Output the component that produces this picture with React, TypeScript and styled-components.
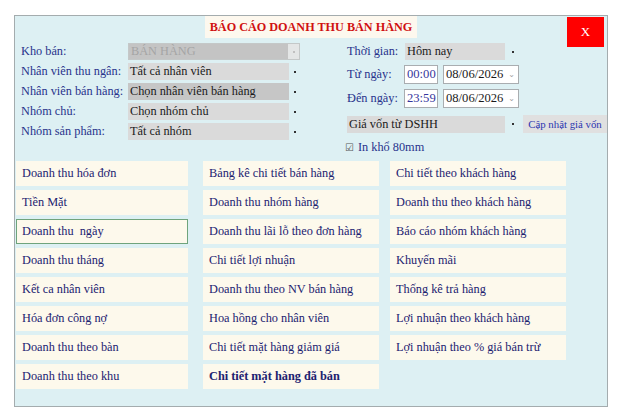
import { Fragment } from "react";
import styled, { createGlobalStyle, css } from "styled-components";

const GlobalStyle = createGlobalStyle`
  html, body {
    margin: 0;
    padding: 0;
    background: #ffffff;
  }
  body {
    font-family: "Liberation Serif", "Times New Roman", serif;
  }
`;

const navy = "#28338c";
const ink = "#1c2270";
const textSize = "12.3px";

const Panel = styled.div`
  box-sizing: border-box;
  margin: 15px 0 0 14px;
  width: 594px;
  height: 392px;
  border: 1px solid #a4acae;
  background: #ddf0f3;
  display: flex;
  flex-direction: column;
`;

const Header = styled.div`
  display: grid;
  grid-template-columns: 1fr auto 1fr;
  grid-template-rows: 27px;
  align-items: start;
`;

const Title = styled.h1`
  grid-column: 2;
  margin: 0;
  height: 22px;
  padding: 0 5px;
  background: #fdf8ee;
  color: #d01010;
  font-size: 12.2px;
  font-weight: bold;
  line-height: 23px;
  white-space: nowrap;
`;

const CloseButton = styled.button`
  grid-column: 3;
  justify-self: end;
  margin: 1px 3px 0 0;
  width: 37px;
  height: 30px;
  border: none;
  background: #ff0000;
  color: #ffffff;
  font-family: "Liberation Serif", serif;
  font-size: 13px;
  padding: 0;
`;

const FormArea = styled.div`
  display: flex;
  height: 118px;
`;

const LeftForm = styled.div`
  margin-left: 6px;
  display: grid;
  grid-template-columns: 107px 172px;
  grid-auto-rows: 17px;
  row-gap: 3px;
  align-content: start;
`;

const Label = styled.span<{ $w?: number }>`
  color: ${navy};
  font-size: ${textSize};
  line-height: 17px;
  white-space: nowrap;
  ${(p) =>
    p.$w &&
    css`
      width: ${p.$w}px;
      flex: none;
    `}
`;

const SelectBox = styled.div<{ $w: number; $disabled?: boolean }>`
  box-sizing: border-box;
  display: flex;
  width: ${(p) => p.$w}px;
  height: 17px;
  ${(p) =>
    p.$disabled &&
    css`
      border: 1px solid #c4c8c8;
    `}
`;

type Tone = "normal" | "dark" | "disabled";

const SelectValue = styled.div<{ $tone: Tone }>`
  flex: 1;
  padding-left: 2px;
  font-size: ${textSize};
  line-height: ${(p) => (p.$tone === "disabled" ? 15 : 17)}px;
  white-space: nowrap;
  overflow: hidden;
  color: ${(p) => (p.$tone === "disabled" ? "#a4a4a4" : "#1a1a1a")};
  background: ${(p) =>
    p.$tone === "dark" ? "#c6c6c6" : p.$tone === "disabled" ? "#c4c4c4" : "#dadada"};
`;

const SelectArrow = styled.div<{ $disabled?: boolean; $w: number }>`
  width: ${(p) => p.$w}px;
  display: flex;
  align-items: center;
  justify-content: center;
  background: ${(p) => (p.$disabled ? "#e4e6e6" : "transparent")};
  &::after {
    content: "";
    width: 2px;
    height: 2px;
    background: ${(p) => (p.$disabled ? "#c0c0c0" : "#333")};
  }
`;

const RightForm = styled.div`
  margin-left: 47px;
  display: flex;
  flex-direction: column;
  gap: 5px;
`;

const Row = styled.div<{ $mt?: number }>`
  display: flex;
  align-items: center;
  margin-top: ${(p) => p.$mt ?? 0}px;
`;

const InputBox = styled.div<{ $w: number; $blue?: boolean; $ml?: number }>`
  box-sizing: border-box;
  display: flex;
  align-items: center;
  justify-content: space-between;
  width: ${(p) => p.$w}px;
  height: 19px;
  margin-left: ${(p) => p.$ml ?? 0}px;
  padding: 0 3px 0 2px;
  background: #ffffff;
  border: 1px solid #a9adb0;
  color: ${(p) => (p.$blue ? "#35359c" : "#1a1a1a")};
  font-size: 12.6px;
  white-space: nowrap;
`;

const Chevron = styled.span`
  color: #a0a0a0;
  font-size: 8px;
  font-family: "DejaVu Sans", sans-serif;
`;

const UpdateButton = styled.button`
  margin-left: 3px;
  width: 84px;
  height: 18px;
  padding: 0;
  border: none;
  background: #e0e0e0;
  color: #2b36b0;
  font-family: "Liberation Serif", serif;
  font-size: 10.8px;
  white-space: nowrap;
`;

const CheckRow = styled.label`
  display: flex;
  align-items: center;
  gap: 4px;
  color: ${navy};
  font-size: ${textSize};
  margin-left: -2px;
`;

const CheckGlyph = styled.span`
  color: #555;
  font-size: 10px;
  font-family: "DejaVu Sans", sans-serif;
`;

const ButtonGrid = styled.div`
  display: grid;
  grid-template-columns: 187px 187px 176px;
  margin-left: 1px;
  align-items: start;
`;

const Column = styled.div<{ $btnWidth: number }>`
  display: flex;
  flex-direction: column;
  gap: 4px;
  width: ${(p) => p.$btnWidth}px;
`;

const ReportButton = styled.div<{ $active?: boolean; $bold?: boolean }>`
  box-sizing: border-box;
  height: 25px;
  padding-left: 6px;
  background: #fdf9ec;
  color: ${ink};
  font-size: ${textSize};
  line-height: 25px;
  white-space: pre;
  font-weight: ${(p) => (p.$bold ? "bold" : "normal")};
  ${(p) =>
    p.$active &&
    css`
      border: 1px solid #6fa47c;
      line-height: 23px;
      padding-left: 5px;
    `}
`;

type Report = { text: string; active?: boolean; bold?: boolean };

const columns: { width: number; items: Report[] }[] = [
  {
    width: 172,
    items: [
      { text: "Doanh thu hóa đơn" },
      { text: "Tiền Mặt" },
      { text: "Doanh thu  ngày", active: true },
      { text: "Doanh thu tháng" },
      { text: "Kết ca nhân viên" },
      { text: "Hóa đơn công nợ" },
      { text: "Doanh thu theo bàn" },
      { text: "Doanh thu theo khu" },
    ],
  },
  {
    width: 176,
    items: [
      { text: "Bảng kê chi tiết bán hàng" },
      { text: "Doanh thu nhóm hàng" },
      { text: "Doanh thu lãi lỗ theo đơn hàng" },
      { text: "Chi tiết lợi nhuận" },
      { text: "Doanh thu theo NV bán hàng" },
      { text: "Hoa hồng cho nhân viên" },
      { text: "Chi tiết mặt hàng giảm giá" },
      { text: "Chi tiết mặt hàng đã bán", bold: true },
    ],
  },
  {
    width: 176,
    items: [
      { text: "Chi tiết theo khách hàng" },
      { text: "Doanh thu theo khách hàng" },
      { text: "Báo cáo nhóm khách hàng" },
      { text: "Khuyến mãi" },
      { text: "Thống kê trả hàng" },
      { text: "Lợi nhuận theo khách hàng" },
      { text: "Lợi nhuận theo % giá bán trừ" },
    ],
  },
];

const leftFields: { label: string; value: string; tone: Tone }[] = [
  { label: "Kho bán:", value: "BÁN HÀNG", tone: "disabled" },
  { label: "Nhân viên thu ngân:", value: "Tất cả nhân viên", tone: "normal" },
  { label: "Nhân viên bán hàng:", value: "Chọn nhân viên bán hàng", tone: "dark" },
  { label: "Nhóm chủ:", value: "Chọn nhóm chủ", tone: "normal" },
  { label: "Nhóm sản phẩm:", value: "Tất cả nhóm", tone: "normal" },
];

const Select = ({
  width,
  value,
  tone = "normal",
  arrowWidth = 11,
}: {
  width: number;
  value: string;
  tone?: Tone;
  arrowWidth?: number;
}) => (
  <SelectBox $w={width} $disabled={tone === "disabled"}>
    <SelectValue $tone={tone}>{value}</SelectValue>
    <SelectArrow $w={arrowWidth} $disabled={tone === "disabled"} />
  </SelectBox>
);

export default function App() {
  return (
    <>
      <GlobalStyle />
      <Panel>
        <Header>
          <Title>BÁO CÁO DOANH THU BÁN HÀNG</Title>
          <CloseButton>X</CloseButton>
        </Header>

        <FormArea>
          <LeftForm>
            {leftFields.map((f) => (
              <Fragment key={f.label}>
                <Label>{f.label}</Label>
                <Select width={172} value={f.value} tone={f.tone} />
              </Fragment>
            ))}
          </LeftForm>

          <RightForm>
            <Row>
              <Label $w={58}>Thời gian:</Label>
              <Select width={115} value="Hôm nay" arrowWidth={15} />
            </Row>
            <Row>
              <Label $w={57}>Từ ngày:</Label>
              <InputBox $w={34} $blue>
                00:00
              </InputBox>
              <InputBox $w={76} $ml={5}>
                08/06/2026 <Chevron>⌄</Chevron>
              </InputBox>
            </Row>
            <Row>
              <Label $w={57}>Đến ngày:</Label>
              <InputBox $w={34} $blue>
                23:59
              </InputBox>
              <InputBox $w={76} $ml={5}>
                08/06/2026 <Chevron>⌄</Chevron>
              </InputBox>
            </Row>
            <Row $mt={2}>
              <Select width={173} value="Giá vốn từ DSHH" arrowWidth={15} />
              <UpdateButton>Cập nhật giá vốn</UpdateButton>
            </Row>
            <Row $mt={2}>
              <CheckRow>
                <CheckGlyph>☑</CheckGlyph>
                In khổ 80mm
              </CheckRow>
            </Row>
          </RightForm>
        </FormArea>

        <ButtonGrid>
          {columns.map((col, i) => (
            <Column key={i} $btnWidth={col.width}>
              {col.items.map((it) => (
                <ReportButton key={it.text} $active={it.active} $bold={it.bold}>
                  {it.text}
                </ReportButton>
              ))}
            </Column>
          ))}
        </ButtonGrid>
      </Panel>
    </>
  );
}
